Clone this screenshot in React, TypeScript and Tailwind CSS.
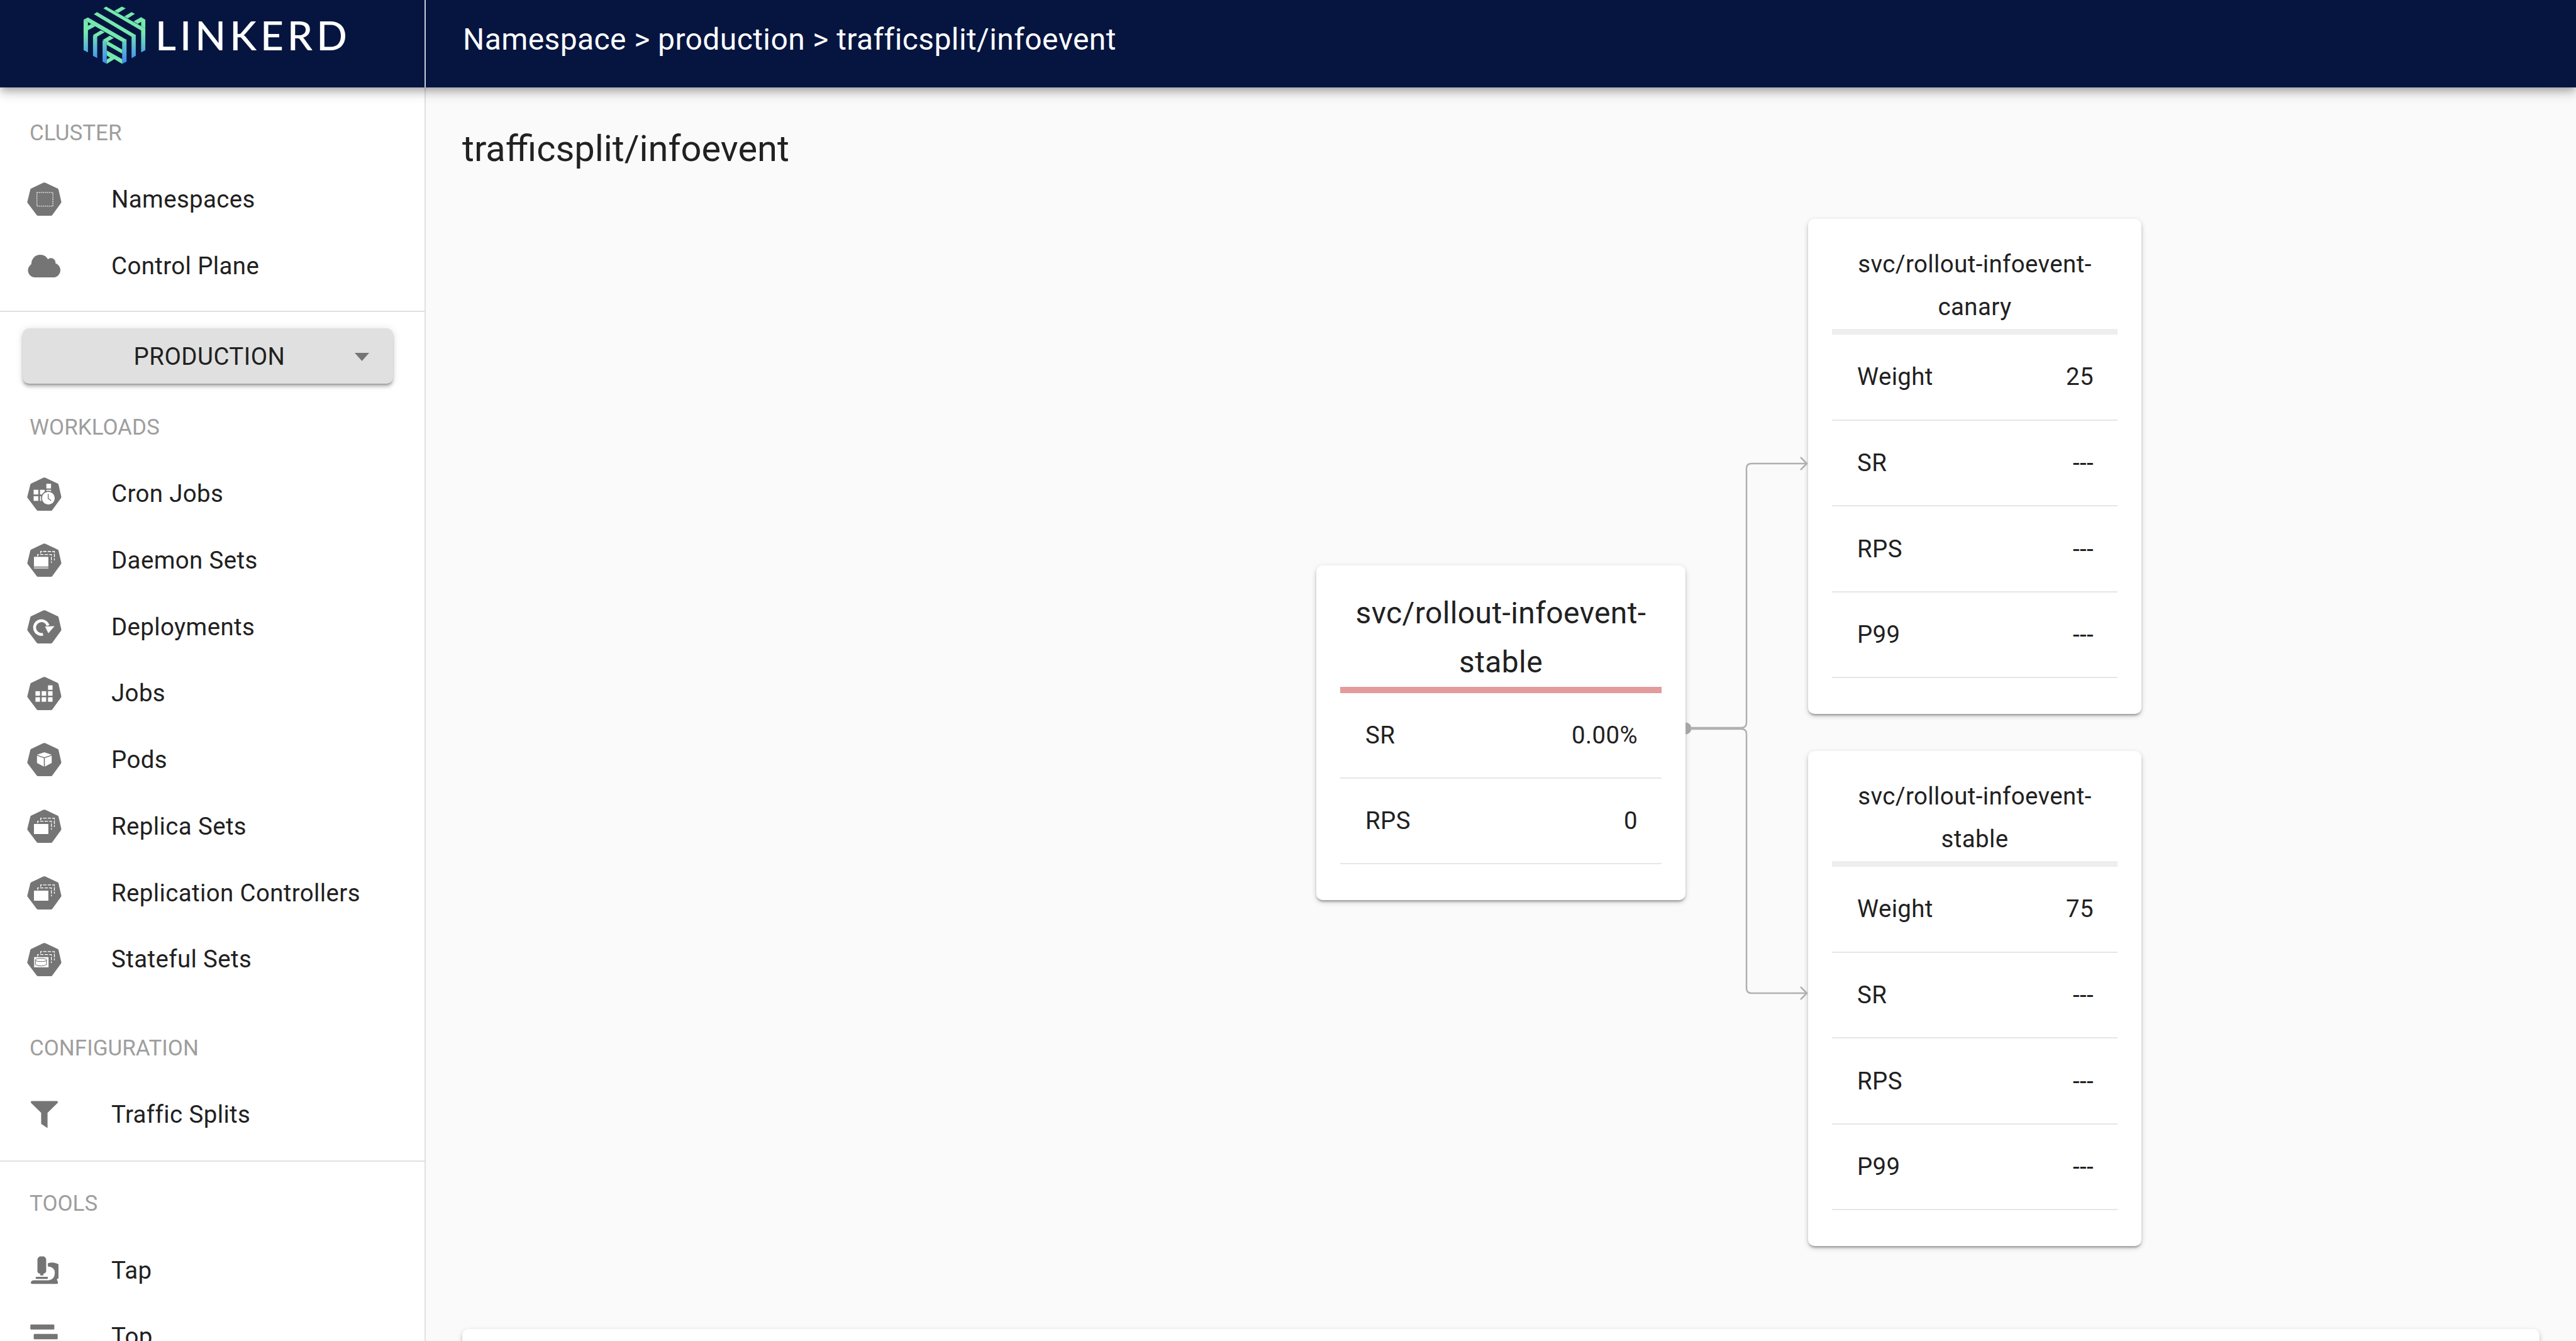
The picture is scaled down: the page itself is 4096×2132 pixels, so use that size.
import type { ReactNode } from "react";

function Hept({ children, className = "" }: { children?: ReactNode; className?: string }) {
  return (
    <svg viewBox="72 38 204 199" className={`w-[55px] h-[53px] ${className}`}>
      <path
        d="M168 40 Q174 37 180 40 L254 75 Q258 78 259 82 L275 152 Q276 158 273 162 L222 232 Q219 237 213 237 L137 237 Q131 237 128 232 L75 162 Q71 158 73 152 L90 82 Q91 78 95 75 Z"
        fill="#757575"
      />
      {children}
    </svg>
  );
}

function Stack({ y }: { y: number }) {
  return (
    <g fill="none" stroke="#fff" strokeWidth="5" strokeDasharray="20 7">
      <path d={`M134 ${y + 14} V${y + 2} H216 V${y + 52}`} />
      <path d={`M152 ${y - 4} V${y - 16} H234 V${y + 36}`} />
    </g>
  );
}

const NamespaceIcon = () => (
  <Hept>
    <rect x="130" y="98" width="95" height="82" fill="none" stroke="#fff" strokeWidth="4" strokeDasharray="8 4" />
  </Hept>
);

const CronIcon = () => (
  <Hept>
    <g fill="#fff">
      <rect x="110" y="112" width="28" height="28" />
      <rect x="110" y="150" width="28" height="28" />
      <rect x="148" y="112" width="28" height="28" />
      <rect x="148" y="150" width="28" height="28" />
      <rect x="186" y="76" width="28" height="28" />
      <rect x="186" y="112" width="28" height="28" />
    </g>
    <circle cx="198" cy="162" r="44" fill="#757575" />
    <circle cx="198" cy="162" r="38" fill="#fff" />
    <path d="M197 137 V164 L215 176" fill="none" stroke="#757575" strokeWidth="5" />
  </Hept>
);

const DaemonIcon = () => (
  <Hept>
    <Stack y={102} />
    <rect x="112" y="118" width="86" height="58" fill="#fff" />
    <rect x="112" y="182" width="86" height="5" fill="#fff" />
  </Hept>
);

const DeployIcon = () => (
  <Hept>
    <path d="M166 182 A41 41 0 1 1 196 130" fill="none" stroke="#fff" strokeWidth="17" />
    <path d="M178 136 L235 134 L198 176 Z" fill="#fff" />
  </Hept>
);

const JobsIcon = () => (
  <Hept>
    <g fill="#fff">
      <rect x="196" y="89" width="27" height="27" />
      <rect x="121" y="124" width="27" height="27" />
      <rect x="158" y="124" width="27" height="27" />
      <rect x="196" y="124" width="27" height="27" />
      <rect x="121" y="160" width="27" height="27" />
      <rect x="158" y="160" width="27" height="27" />
      <rect x="196" y="160" width="27" height="27" />
    </g>
  </Hept>
);

const PodIcon = () => (
  <Hept>
    <g fill="#fff">
      <path d="M174 94 L218 109 L174 124 L130 109 Z" />
      <path d="M130 115 L171 129 V180 L130 158 Z" />
      <path d="M177 129 L218 115 V158 L177 180 Z" />
    </g>
  </Hept>
);

const ReplicaIcon = () => (
  <Hept>
    <Stack y={106} />
    <rect x="112" y="124" width="86" height="60" rx="2" fill="#fff" />
  </Hept>
);

const StatefulIcon = () => (
  <Hept>
    <Stack y={106} />
    <rect x="113" y="123" width="86" height="61" fill="#fff" />
    <g fill="none" stroke="#757575" strokeWidth="4">
      <ellipse cx="154" cy="140" rx="33" ry="9" />
      <path d="M121 140 V168 Q154 184 187 168 V140" />
    </g>
  </Hept>
);

const CloudIcon = () => (
  <svg viewBox="45 37 195 135" className="w-[52px] h-[36px] ml-px">
    <g fill="#757575">
      <circle cx="120" cy="90" r="53" />
      <circle cx="184" cy="84" r="27" />
      <circle cx="89" cy="130" r="42" />
      <circle cx="197" cy="129" r="43" />
      <rect x="89" y="110" width="108" height="62" />
    </g>
  </svg>
);

const FunnelIcon = () => (
  <svg viewBox="60 55 168 165" className="w-[45px] h-[44px] ml-[5px]">
    <path
      d="M69 57 H219 Q228 59 223 68 L163 127 V218 L125 193 V127 L65 68 Q60 59 69 57 Z"
      fill="#757575"
    />
  </svg>
);

const TapIcon = () => (
  <svg viewBox="60 48 168 168" className="w-[45px] h-[45px] ml-[5px]">
    <g fill="#757575">
      <path d="M116 50 H142 Q154 58 155 68 V140 Q150 150 138 153 V163 H120 V153 Q106 150 103 140 V68 Q104 58 116 50 Z" />
      <rect x="93" y="171" width="72" height="12" rx="3" />
      <path d="M165 91 A62 52 0 0 1 218 185 L225 204 Q226 213 218 213 H72 Q62 213 64 204 Q68 192 82 192 H170 Q208 186 206 142 Q202 112 165 110 Z" />
    </g>
  </svg>
);

const TopIcon = () => (
  <svg viewBox="62 0 164 88" className="w-[44px] h-[25px] ml-[5px] mb-[16px]">
    <g fill="#757575">
      <rect x="63" y="0" width="142" height="30" rx="5" />
      <rect x="83" y="56" width="142" height="32" rx="5" />
    </g>
  </svg>
);

function LinkerdLogo() {
  return (
    <svg viewBox="190 35 372 345" className="w-[100px] h-[92px]">
      <defs>
        <linearGradient id="bar" gradientUnits="userSpaceOnUse" x1="0" y1="190" x2="0" y2="365">
          <stop offset="0" stopColor="#76E8AE" />
          <stop offset="1" stopColor="#3F8CF2" />
        </linearGradient>
      </defs>
      <g fill="url(#bar)">
        <path d="M192 115 L218 130 V310 L192 297 Z" />
        <path d="M248 210 L273 200 V343 L248 330 Z" />
        <path d="M305 240 L330 240 V378 L305 365 Z" />
        <path d="M422 245 L448 232 V365 L422 378 Z" />
        <path d="M478 215 L503 205 V330 L478 344 Z" />
        <path d="M535 175 L560 165 V297 L535 310 Z" />
      </g>
      <g fill="#76E8AE">
        <path d="M310 47 L326 37 L560 167 L537 180 Z" />
        <path d="M375 62 L420 37 L443 47 L398 74 Z" />
        <path d="M435 95 L478 70 L498 80 L455 107 Z" />
        <path d="M490 125 L535 100 L560 115 V167 L535 153 V128 L515 140 Z" />
        <path d="M253 82 L272 70 L503 207 L478 217 Z" />
        <path d="M192 115 L218 102 L448 235 L422 247 Z" />
        <path d="M192 165 L238 140 L262 154 L192 192 Z" />
        <path d="M248 207 L295 178 L318 190 L273 216 Z" />
        <path d="M305 237 L348 210 L372 224 L330 248 Z" />
        <path d="M330 240 L422 293 V317 L330 265 Z" />
        <path d="M330 298 L422 350 V378 L375 350 L330 378 V352 L350 341 L330 328 Z" />
      </g>
    </svg>
  );
}

const clusterItems = [
  { label: "Namespaces", icon: <NamespaceIcon /> },
  { label: "Control Plane", icon: <CloudIcon /> },
];

const workloadItems = [
  { label: "Cron Jobs", icon: <CronIcon /> },
  { label: "Daemon Sets", icon: <DaemonIcon /> },
  { label: "Deployments", icon: <DeployIcon /> },
  { label: "Jobs", icon: <JobsIcon /> },
  { label: "Pods", icon: <PodIcon /> },
  { label: "Replica Sets", icon: <ReplicaIcon /> },
  { label: "Replication Controllers", icon: <ReplicaIcon /> },
  { label: "Stateful Sets", icon: <StatefulIcon /> },
];

const toolItems = [
  { label: "Tap", icon: <TapIcon /> },
  { label: "Top", icon: <TopIcon /> },
];

function SectionLabel({ children, className = "" }: { children: ReactNode; className?: string }) {
  return (
    <div className={`h-[58px] mb-[23px] pl-[47px] shrink-0 flex items-center text-[35px] text-[#9e9e9e] ${className}`}>
      {children}
    </div>
  );
}

function NavItem({ label, icon }: { label: string; icon: ReactNode }) {
  return (
    <div className="h-[105.7px] shrink-0 flex items-center">
      <div className="w-[177px] pl-[43px] shrink-0 flex items-center">{icon}</div>
      <span className="text-[38.4px] tracking-[0.4px] text-[#212121]">{label}</span>
    </div>
  );
}

function Row({ label, value, height }: { label: string; value: string; height: string }) {
  return (
    <div className={`${height} flex items-center justify-between pl-[40px] pr-[38px] border-b-2 border-[#e6e6e6] text-[38.4px] tracking-[0.4px] text-[#212121]`}>
      <span>{label}</span>
      <span>{value}</span>
    </div>
  );
}

function BackendCard({ name, weight }: { name: string; weight: string }) {
  return (
    <div className="w-[530px] h-[787px] rounded-[10px] bg-white px-[38px] pt-[38px] shadow-[0_3px_8px_rgba(0,0,0,0.2),0_3px_3px_rgba(0,0,0,0.14),0_5px_3px_-3px_rgba(0,0,0,0.12)]">
      <div className="text-center text-[38.4px] leading-[68px] tracking-[0.4px] text-[#212121] border-b-[9px] border-[#eeeeee] pb-px">
        svc/rollout-infoevent-{name}
      </div>
      <Row label="Weight" value={weight} height="h-[136.6px]" />
      <Row label="SR" value="---" height="h-[136.6px]" />
      <Row label="RPS" value="---" height="h-[136.6px]" />
      <Row label="P99" value="---" height="h-[136.6px]" />
    </div>
  );
}

export default function App() {
  return (
    <div className="h-screen w-full overflow-hidden flex flex-col bg-[#fafafa] font-[family-name:Roboto,sans-serif]">
      <header className="relative z-10 h-[139px] shrink-0 flex bg-[#061540] shadow-[0_5px_10px_-3px_rgba(0,0,0,0.2),0_10px_13px_rgba(0,0,0,0.14),0_3px_26px_rgba(0,0,0,0.12)]">
        <div className="w-[677px] shrink-0 border-r-2 border-[#c8ccd6] flex items-start pl-[132px] pt-[10px]">
          <LinkerdLogo />
          <span className="ml-[15px] mt-[14px] text-[64px] leading-[64px] tracking-[6px] font-medium text-white font-[family-name:Lato,sans-serif]">
            LINKERD
          </span>
        </div>
        <div className="pl-[59px] h-[126px] flex items-center text-[48px] tracking-[0.4px] text-white">
          Namespace &gt; production &gt; trafficsplit/infoevent
        </div>
      </header>

      <div className="flex flex-1 min-h-0">
        <aside className="w-[677px] shrink-0 bg-white border-r-2 border-[#e0e0e0] flex flex-col overflow-hidden">
          <SectionLabel className="mt-[44px]">CLUSTER</SectionLabel>
          {clusterItems.map((item) => (
            <NavItem key={item.label} {...item} />
          ))}
          <div className="mt-[19px] h-[2px] shrink-0 bg-[#e0e0e0]" />

          <button className="mt-[26px] ml-[36px] w-[589px] h-[88px] shrink-0 rounded-[10px] bg-[#e0e0e0] flex items-center pl-[66px] pr-[38px] text-[38.4px] tracking-[0.5px] text-[#212121] shadow-[0_3px_3px_-2px_rgba(0,0,0,0.3),0_5px_5px_rgba(0,0,0,0.2),0_1px_13px_rgba(0,0,0,0.12)]">
            <span className="flex-1 text-center">PRODUCTION</span>
            <svg viewBox="0 0 23 13" className="w-[23px] h-[13px] mt-[3px]">
              <path d="M0 0 H23 L11.5 13 Z" fill="#757575" />
            </svg>
          </button>

          <SectionLabel className="mt-[41px]">WORKLOADS</SectionLabel>
          {workloadItems.map((item) => (
            <NavItem key={item.label} {...item} />
          ))}

          <SectionLabel className="mt-[60px]">CONFIGURATION</SectionLabel>
          <NavItem label="Traffic Splits" icon={<FunnelIcon />} />
          <div className="mt-[20px] h-[2px] shrink-0 bg-[#e0e0e0]" />

          <SectionLabel className="mt-[39px]">TOOLS</SectionLabel>
          {toolItems.map((item) => (
            <NavItem key={item.label} {...item} />
          ))}
        </aside>

        <main className="flex-1 min-w-0 px-[58px] pt-[59px] overflow-hidden">
          <h1 className="text-[57.8px] leading-[76px] text-[#212121]">trafficsplit/infoevent</h1>

          <div className="relative mt-[74px] flex items-center pl-[1358px]">
            <div className="w-[587px] h-[532px] shrink-0 rounded-[10px] bg-white px-[38px] pt-[37px] shadow-[0_3px_8px_rgba(0,0,0,0.2),0_3px_3px_rgba(0,0,0,0.14),0_5px_3px_-3px_rgba(0,0,0,0.12)]">
              <div className="text-center text-[48px] leading-[78px] tracking-[0.4px] text-[#212121] border-b-[10px] border-[#e39b9b]">
                svc/rollout-infoevent-stable
              </div>
              <Row label="SR" value="0.00%" height="h-[136px]" />
              <Row label="RPS" value="0" height="h-[136px]" />
            </div>

            <svg viewBox="0 0 195 1632" className="absolute left-[1945px] top-0 w-[195px] h-[1632px]">
              <path d="M0 800.5 A9.5 9.5 0 0 1 0 819.5 Z" fill="#a6a6a6" />
              <g fill="none" stroke="#b0b0b0" strokeWidth="2.5">
                <path d="M8 809 H89 Q97 809 97 801 V397 Q97 389 105 389 H193" />
                <path d="M8 811 H89 Q97 811 97 819 V1223 Q97 1231 105 1231 H193" />
                <path d="M183 379 L193 389 L183 399" />
                <path d="M183 1221 L193 1231 L183 1241" />
              </g>
            </svg>

            <div className="ml-[195px] flex flex-col gap-[59px]">
              <BackendCard name="canary" weight="25" />
              <BackendCard name="stable" weight="75" />
            </div>
          </div>

          <div className="mt-[132px] h-[400px] rounded-[10px] bg-white shadow-[0_3px_8px_rgba(0,0,0,0.2),0_3px_3px_rgba(0,0,0,0.14),0_5px_3px_-3px_rgba(0,0,0,0.12)]" />
        </main>
      </div>
    </div>
  );
}
